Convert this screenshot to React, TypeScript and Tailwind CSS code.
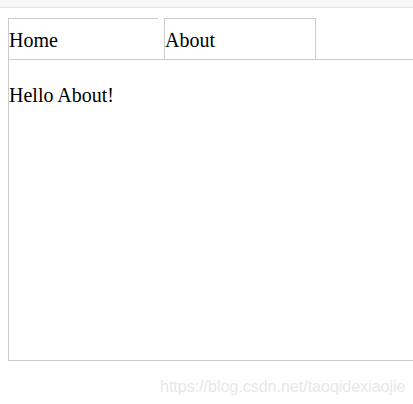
export default function App() {
  const serif = { fontFamily: '"Liberation Serif", "Times New Roman", serif' };

  return (
    <div className="relative h-[404px] w-[413px] overflow-hidden bg-white">
      <div className="h-[8px] border-b border-[#e3e3e3] bg-[#f7f7f7]" />
      <div className="w-[420px] pl-[8px] pt-[10px] text-[20px] text-black" style={serif}>
        <div className="flex h-[41px] items-end">
          <div className="flex h-[41px] w-[150px] items-center border-l border-t border-[#cccccc] pt-[2px]">
            Home
          </div>
          <div className="ml-[6px] flex h-[41px] w-[152px] items-center border border-b-0 border-[#cccccc] pt-[2px]">
            About
          </div>
        </div>
        <div className="h-[302px] border border-[#cccccc] pt-[20px]">Hello About!</div>
      </div>
      <div
        className="absolute left-[160px] top-[375px] text-[16px] text-[#e8e8e8]"
        style={{ fontFamily: '"Liberation Sans", Arial, sans-serif' }}
      >
        https://blog.csdn.net/taoqidexiaojie
      </div>
    </div>
  );
}
